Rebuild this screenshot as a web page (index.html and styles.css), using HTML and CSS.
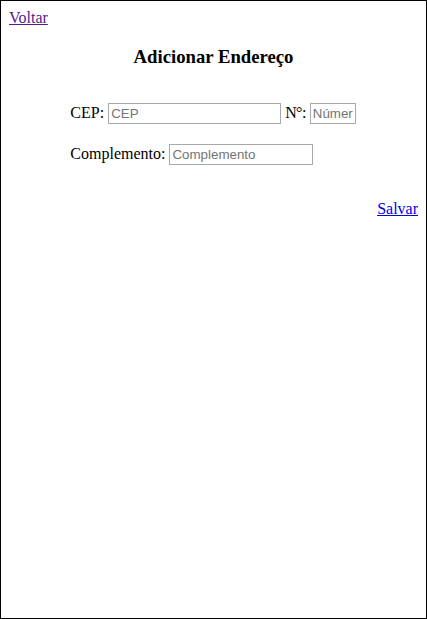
FILE: index.html
```html
<!DOCTYPE html>
<html>
<head>
<meta charset="utf-8">
<link rel="stylesheet" href="styles.css">
</head>
<body>
<a class="back" href="#">Voltar</a>
<h3 class="title">Adicionar Endereço</h3>
<form class="form">
  <p class="row">
    <label>CEP:</label> <input class="in-cep" type="text" placeholder="CEP"> <label class="lbl-num">N°:</label> <input class="in-num" type="text" placeholder="Número">
  </p>
  <p class="row">
    <label>Complemento:</label> <input class="in-comp" type="text" placeholder="Complemento">
  </p>
</form>
<div class="actions"><a class="save" href="#">Salvar</a></div>
</body>
</html>
```
FILE: styles.css
```css
html {
  height: 100%;
  box-sizing: border-box;
  border: 1px solid #000;
}
body {
  margin: 8px;
  font-family: "Liberation Serif", serif;
  font-size: 16px;
}
.back {
  color: #551a8b;
}
.title {
  text-align: center;
  font-size: 18.72px;
  margin: 18.72px 0;
}
.form {
  width: 70%;
  margin: 0 auto;
  padding-top: 1px;
}
.row {
  margin: 16px 0 20px;
  white-space: nowrap;
}
.lbl-num {
  letter-spacing: -0.6px;
}
input {
  font-family: "Liberation Sans", Arial, sans-serif;
  font-size: 13.333px;
  box-sizing: border-box;
  height: 21px;
  padding: 1px 2px;
  border: 1px solid #a9a9a9;
  color: #000;
}
input::placeholder {
  color: #757575;
}
.in-cep { width: 173px; }
.in-num { width: 46px; }
.in-comp { width: 144px; }
.actions {
  text-align: right;
  margin-top: 35px;
}
.save {
  color: #0000ee;
}
```
